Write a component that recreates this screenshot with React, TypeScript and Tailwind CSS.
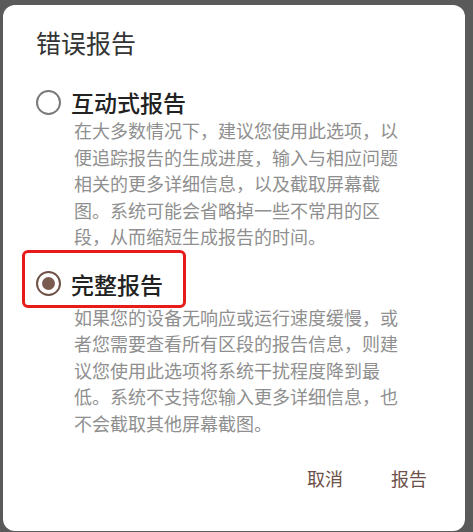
const cjk = { fontFamily: '"Noto Sans CJK SC", "Noto Sans", sans-serif' };

function Radio({ checked }: { checked?: boolean }) {
  if (checked) {
    return (
      <span className="flex h-[25px] w-[25px] shrink-0 items-center justify-center rounded-full border-[2.5px] border-[#6e5147]">
        <span className="h-[13px] w-[13px] rounded-full bg-[#7a5b50]" />
      </span>
    );
  }
  return <span className="h-[25px] w-[25px] shrink-0 rounded-full border-[2.5px] border-[#7a7a7a]" />;
}

function Option({
  label,
  checked,
  children,
  className,
}: {
  label: string;
  checked?: boolean;
  children: React.ReactNode;
  className?: string;
}) {
  return (
    <div className={className}>
      <div className="flex h-[30px] items-center gap-[10px]">
        <Radio checked={checked} />
        <span className="text-[23px] font-medium leading-[30px] text-[#222]">{label}</span>
      </div>
      <p className="ml-[38px] w-[330px] text-[18px] leading-[26.5px] text-[#8f8f8f]">{children}</p>
    </div>
  );
}

export default function App() {
  return (
    <div className="h-[532px] w-[473px] bg-[#5a5a5a] pt-[5px] pl-[3px]" style={cjk}>
      <div className="relative flex h-[526px] w-[462px] flex-col rounded-[12px] bg-white pl-[33px] pr-[38px]">
        <h1 className="mt-[21px] text-[25px] font-normal leading-[32px] text-[#333]">错误报告</h1>

        <Option className="mt-[29px]" label="互动式报告">
          在大多数情况下，建议您使用此选项，以便追踪报告的生成进度，输入与相应问题相关的更多详细信息，以及截取屏幕截图。系统可能会省略掉一些不常用的区段，从而缩短生成报告的时间。
        </Option>

        <Option className="mt-[19px] [&>p]:mt-[5px]" label="完整报告" checked>
          如果您的设备无响应或运行速度缓慢，或者您需要查看所有区段的报告信息，则建议您使用此选项将系统干扰程度降到最低。系统不支持您输入更多详细信息，也不会截取其他屏幕截图。
        </Option>

        <div className="mt-auto mb-[41px] flex justify-end gap-[48px] text-[18px] leading-[24px] text-[#6d5048]">
          <button>取消</button>
          <button>报告</button>
        </div>

        <div className="absolute left-[19px] top-[245px] h-[58px] w-[164px] rounded-[6px] border-[3px] border-[#e81b1b]" />
      </div>
    </div>
  );
}
